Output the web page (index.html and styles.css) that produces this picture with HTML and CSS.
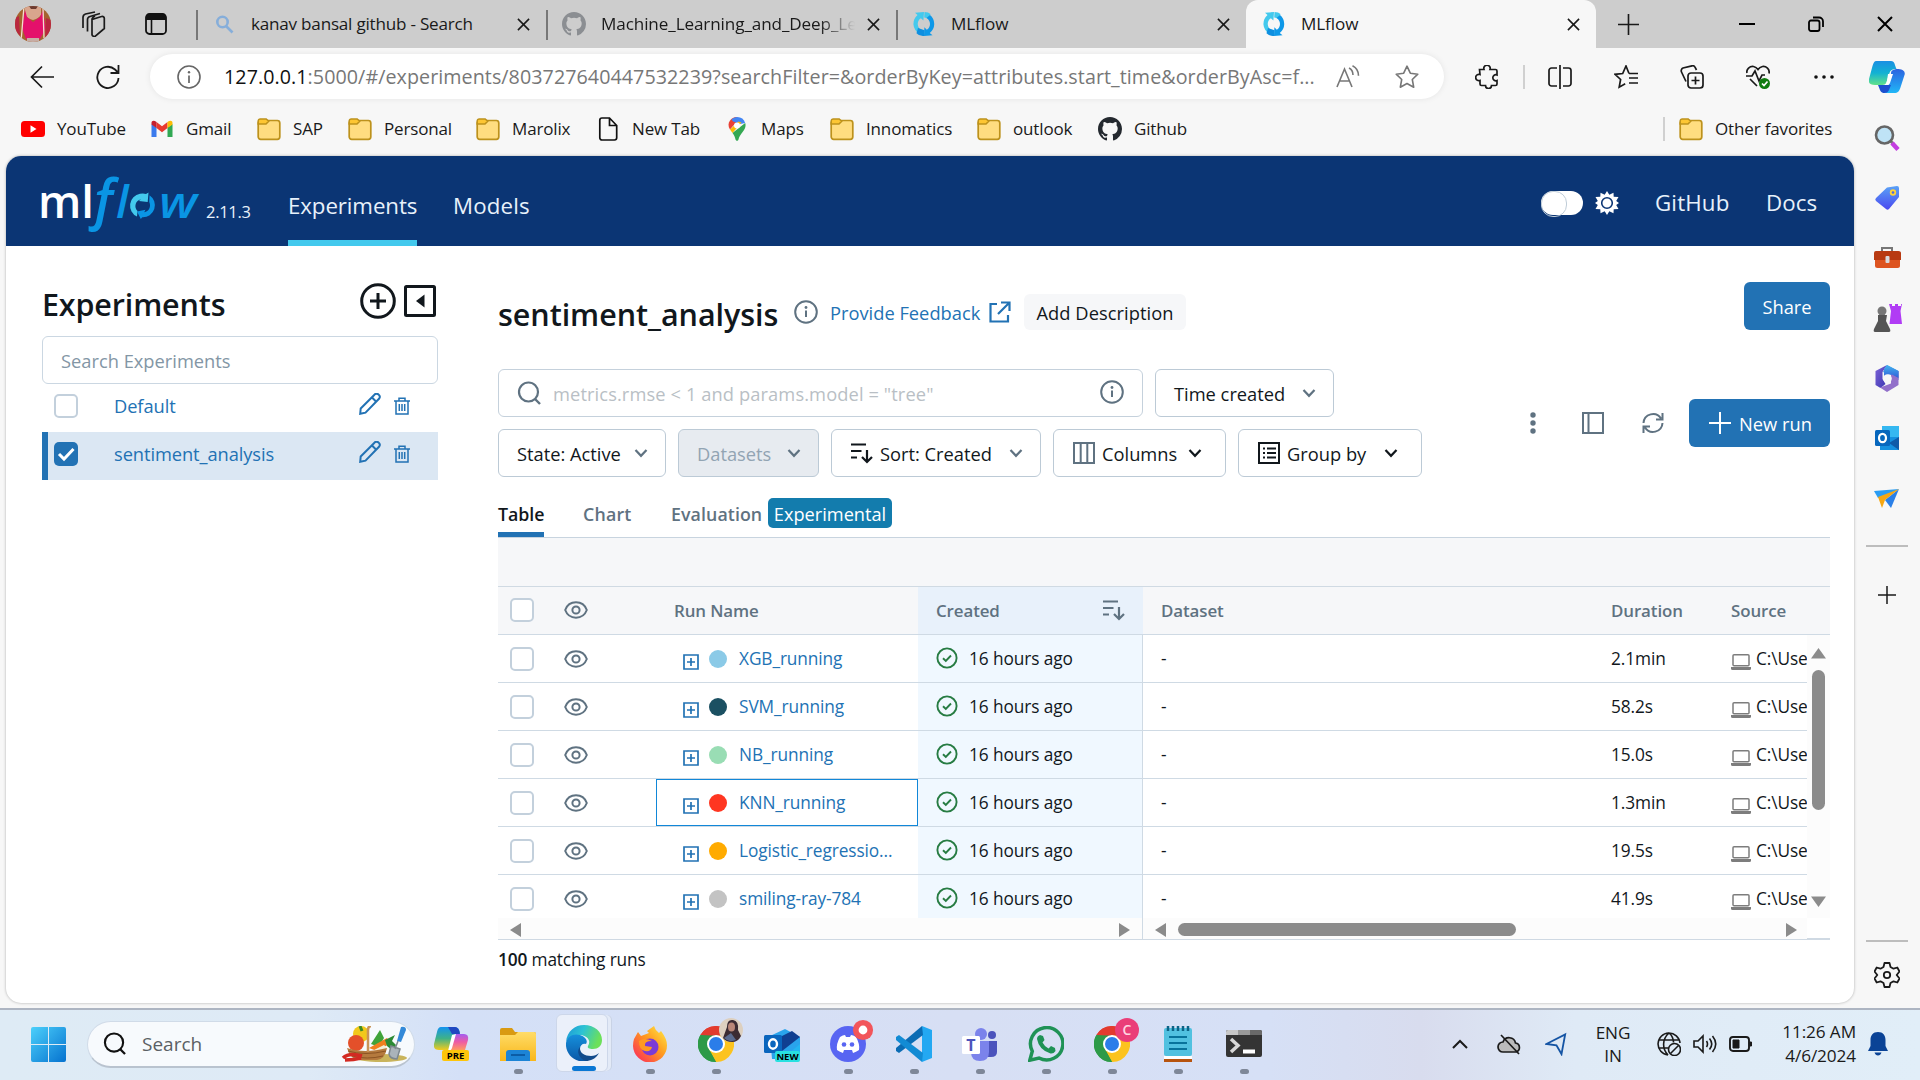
FILE: index.html
```html
<!DOCTYPE html>
<html lang="en">
<head>
<meta charset="utf-8">
<title>MLflow</title>
<link rel="stylesheet" href="styles.css">
</head>
<body>
<svg class="defs" aria-hidden="true">
  <defs>
    <linearGradient id="g-win" x1="0" y1="0" x2="1" y2="1"><stop offset="0" stop-color="#4cd0fb"/><stop offset="1" stop-color="#0572cf"/></linearGradient>
    <linearGradient id="g-cop1" x1="0" y1="0" x2="0" y2="1"><stop offset="0" stop-color="#1a8fe3"/><stop offset=".5" stop-color="#12b2d3"/><stop offset="1" stop-color="#62e28a"/></linearGradient>
    <linearGradient id="g-cop2" x1="0" y1="0" x2="0" y2="1"><stop offset="0" stop-color="#2b62e0"/><stop offset="1" stop-color="#20b7f7"/></linearGradient>
    <linearGradient id="g-pre1" x1="0" y1="0" x2="0" y2="1"><stop offset="0" stop-color="#1393f0"/><stop offset=".5" stop-color="#3fb287"/><stop offset="1" stop-color="#f2cb1d"/></linearGradient>
    <linearGradient id="g-pre2" x1="0" y1="0" x2="0" y2="1"><stop offset="0" stop-color="#a35df0"/><stop offset=".5" stop-color="#ee5ba4"/><stop offset="1" stop-color="#ff9a60"/></linearGradient>
    <linearGradient id="g-edge1" x1="0" y1="0" x2="1" y2=".3"><stop offset="0" stop-color="#1b96d8"/><stop offset=".5" stop-color="#2dc3d4"/><stop offset="1" stop-color="#6ce05a"/></linearGradient>
    <linearGradient id="g-edge2" x1="0" y1="0" x2="0" y2="1"><stop offset="0" stop-color="#1690dc"/><stop offset="1" stop-color="#0b57a6"/></linearGradient>
    <linearGradient id="g-tag" x1="0" y1="0" x2="0" y2="1"><stop offset="0" stop-color="#5aa2f6"/><stop offset="1" stop-color="#4a48f0"/></linearGradient>
    <linearGradient id="g-fold" x1="0" y1="0" x2="0" y2="1"><stop offset="0" stop-color="#ffdc68"/><stop offset="1" stop-color="#f9b71a"/></linearGradient>
    <linearGradient id="g-ff" x1="1" y1="0" x2="0" y2="1"><stop offset="0" stop-color="#fff04a"/><stop offset=".45" stop-color="#ff9a1f"/><stop offset="1" stop-color="#fb1c62"/></linearGradient>
    <linearGradient id="g-m1" x1="0" y1="0" x2="1" y2="1"><stop offset="0" stop-color="#7d63d8"/><stop offset="1" stop-color="#3a36b0"/></linearGradient>
    <linearGradient id="g-m2" x1="0" y1="0" x2="0" y2="1"><stop offset="0" stop-color="#43b4f0"/><stop offset="1" stop-color="#305fd8"/></linearGradient>
  </defs>
  <symbol id="x" viewBox="0 0 14 14"><path d="M1 1l12 12M13 1L1 13" fill="none" stroke="#1a1a1a" stroke-width="1.7"/></symbol>
  <symbol id="github" viewBox="0 0 16 16"><path d="M8 0C3.58 0 0 3.58 0 8c0 3.54 2.29 6.53 5.47 7.59.4.07.55-.17.55-.38 0-.19-.01-.82-.01-1.49-2.01.37-2.53-.49-2.69-.94-.09-.23-.48-.94-.82-1.13-.28-.15-.68-.52-.01-.53.63-.01 1.08.58 1.23.82.72 1.21 1.87.87 2.33.66.07-.52.28-.87.51-1.07-1.78-.2-3.64-.89-3.64-3.95 0-.87.31-1.59.82-2.15-.08-.2-.36-1.02.08-2.12 0 0 .67-.21 2.2.82a7.5 7.5 0 0 1 4 0c1.53-1.04 2.2-.82 2.2-.82.44 1.1.16 1.92.08 2.12.51.56.82 1.27.82 2.15 0 3.07-1.87 3.75-3.65 3.95.29.25.54.73.54 1.48 0 1.07-.01 1.93-.01 2.2 0 .21.15.46.55.38A8.01 8.01 0 0 0 16 8c0-4.42-3.58-8-8-8z"/></symbol>
  <symbol id="mlf" viewBox="0 0 24 24"><path d="M7 21.600A11.500 11.500 0 0 1 5.500 3L3 .8 12 0l-.6 8.400-2.500-2.200A6.800 6.800 0 0 0 9.500 18z" fill="#43c9ed"/><path d="M12.500 0q4 0 6 2l-2 4.800q-2-1.300-4.300-1.400z" fill="#43c9ed"/><path d="M18 3A11.500 11.500 0 0 1 17.800 21l2.700 2.200L12 24l.4-8.800 2.400 2.500A6.800 6.800 0 0 0 14.500 6z" fill="#0e98e8"/><path d="M6 16l6.500 2.300L12 24q-5 .2-7.500-2.800z" fill="#0e8fe0"/></symbol>
  <symbol id="folder" viewBox="0 0 24 24"><rect x="1.200" y="3.500" width="21.600" height="18.800" rx="2.500" fill="#ffdd80" stroke="#bd921c" stroke-width="1.700"/><path d="M1.200 6V4a2 2 0 0 1 2-2h6l2.500 2.200L9 7H1.200z" fill="#fdc633" stroke="#bd921c" stroke-width="1.500"/></symbol>
  <symbol id="chev" viewBox="0 0 14 14"><path d="M1.500 4L7 9.800 12.500 4" fill="none" stroke="currentColor" stroke-width="2.200"/></symbol>
  <symbol id="info" viewBox="0 0 24 24"><circle cx="12" cy="12" r="10.800" fill="none" stroke="currentColor" stroke-width="2"/><path d="M12 10.500v6.500" stroke="currentColor" stroke-width="2"/><circle cx="12" cy="7.500" r="1.400" fill="currentColor"/></symbol>
  <symbol id="glass" viewBox="0 0 24 24"><circle cx="11.500" cy="11" r="9.500" fill="none" stroke="currentColor" stroke-width="2.200"/><path d="M18 18l5 5" stroke="currentColor" stroke-width="2.400"/></symbol>
  <symbol id="sort" viewBox="0 0 22 22"><path d="M0 2.500h15M0 9h10.500M0 15.500h6M16 8v12M11 15l5 5 5-5" fill="none" stroke="currentColor" stroke-width="2.200"/></symbol>
  <symbol id="eye" viewBox="0 0 24 18"><path d="M1.200 9C5 -1.200 19 -1.200 22.800 9 19 19.200 5 19.200 1.200 9z" fill="none" stroke="#5f7281" stroke-width="2"/><circle cx="12" cy="9" r="3.600" fill="none" stroke="#5f7281" stroke-width="2"/></symbol>
  <symbol id="plusbox" viewBox="0 0 16 16"><path d="M1 1h14v14H1zM8 4v8M4 8h8" fill="none" stroke="#2272b4" stroke-width="1.700"/></symbol>
  <symbol id="ok" viewBox="0 0 22 22"><circle cx="11" cy="11" r="9.600" fill="none" stroke="#277c43" stroke-width="1.900"/><path d="M7 11.300l2.800 2.700L15 8.500" fill="none" stroke="#277c43" stroke-width="1.900"/></symbol>
  <symbol id="laptop" viewBox="0 0 20 16"><rect x="2" y=".8" width="16" height="11" rx="1" fill="none" stroke="#7d7d7d" stroke-width="1.500"/><path d="M0 13h20v1.500a1.500 1.500 0 0 1-1.500 1.500h-17A1.500 1.500 0 0 1 0 14.500z" fill="#7d7d7d"/></symbol>
  <symbol id="pencil" viewBox="0 0 22 22"><path d="M1.200 20.800l.5-5.300L15.200 2a2.700 2.700 0 0 1 4.800 3.800L6.500 19.700zM13 4.500l4.500 4.500" fill="none" stroke="#2272b4" stroke-width="2"/></symbol>
  <symbol id="trash" viewBox="0 0 16 18"><path d="M0 4h16M2 4v13h12V4M5 4V1.200h6V4M5.300 7v7M8 7v7M10.700 7v7" fill="none" stroke="#2272b4" stroke-width="1.500"/></symbol>
  <symbol id="chrome" viewBox="0 0 36 36"><path d="M18 18L2.400 9A18 18 0 0 1 33.600 9z" fill="#e33b2e"/><path d="M18 18L33.600 9A18 18 0 0 1 18 36z" fill="#fcc31e"/><path d="M18 18v18A18 18 0 0 1 2.400 9z" fill="#2d9a48"/><path d="M18 9.500h15.800L25.500 22z" fill="#fcc31e"/><path d="M25.500 22L18 36l-7.500-13.500z" fill="#fcc31e"/><path d="M10.600 22.500L2.400 9 18 9.500z" fill="#2d9a48"/><path d="M2.400 9A18 18 0 0 1 33.600 9.300H18z" fill="#e33b2e"/><path d="M10.600 22.500L18 36A18 18 0 0 1 2.400 9z" fill="#2d9a48"/><circle cx="18" cy="18" r="9" fill="#fff"/><circle cx="18" cy="18" r="7" fill="#2b7de9"/></symbol>
</svg>

<header class="tabbar">
  <svg class="avatar" viewBox="0 0 36 36"><clipPath id="av"><circle cx="18" cy="18" r="18"/></clipPath><g clip-path="url(#av)"><path fill="#a4632e" d="M0 0h36v36H0z"/><path fill="#d9a58d" d="M10 0h16v9q-3 4-8 5-5-1-8-5z"/><path fill="#e4106b" d="M10 4l2 7 6 5 7-5 3-7 3 18-6 11H11L7 22z"/><path fill="#b9273f" d="M31 12l5 2v14l-6 6zM0 12l4-2 1 20-5-6z"/><path fill="#6d3b30" d="M14 0h9l-2 3h-5z"/><path stroke="#f4ddcf" stroke-width="1.300" d="M9 0L6 36M28 2l1 30"/><path fill="#c7ada5" d="M12 32h12v4H12z"/></g></svg>
  <svg class="workspaces" viewBox="0 0 26 26" fill="none" stroke="#1a1a1a" stroke-width="1.700"><path d="M12 8.500l9.500-3a2 2 0 0 1 2.800 2v10L16 24.500a2.200 2.200 0 0 1-4-1.500zM7.500 20.500V8.500c0-1.500 1-2.500 2.500-3L20 2.500M3 17V6.500c0-2 1-3 2.500-3.500L15 1M12 8.500C12 7 13 6 15 5"/></svg>
  <svg class="tabactions" viewBox="0 0 22 22"><rect x="1" y="1" width="20" height="20" rx="3.500" fill="none" stroke="#111" stroke-width="1.800"/><path d="M1 7V4a3 3 0 0 1 3-3h14a3 3 0 0 1 3 3v3z" fill="#111"/><path d="M6.500 7v14" stroke="#111" stroke-width="1.600"/></svg>
  <div class="tabs">
    <div class="tab"><svg class="fav" viewBox="0 0 24 24" fill="none" stroke="#86aeda" stroke-width="2.600"><circle cx="10.500" cy="10" r="5.200"/><path d="M14 14l6.500 6.500"/></svg><span class="t-search">kanav bansal github - Search</span><svg class="cls"><use href="#x"/></svg></div>
    <div class="tab"><svg class="fav" fill="#8b8e92"><use href="#github"/></svg><span class="fade">Machine_Learning_and_Deep_Learning</span><svg class="cls"><use href="#x"/></svg></div>
    <div class="tab"><svg class="fav"><use href="#mlf"/></svg><span>MLflow</span><svg class="cls"><use href="#x"/></svg></div>
    <div class="tab active"><svg class="fav"><use href="#mlf"/></svg><span>MLflow</span><svg class="cls"><use href="#x"/></svg></div>
  </div>
  <svg class="newtab" viewBox="0 0 22 22"><path d="M11 0v22M0 11h22" stroke="#1a1a1a" stroke-width="1.700"/></svg>
  <div class="winctl">
    <svg viewBox="0 0 16 16"><path d="M0 8h16" stroke="#000" stroke-width="2"/></svg>
    <svg viewBox="0 0 16 16" fill="none" stroke="#000" stroke-width="1.800"><rect x="1" y="4.500" width="10.500" height="10.500" rx="2"/><path d="M5 1.500h6a4 4 0 0 1 4 4V11"/></svg>
    <svg viewBox="0 0 16 16"><path d="M1 1l14 14M15 1L1 15" stroke="#000" stroke-width="2"/></svg>
  </div>
</header>

<div class="toolbar">
  <svg class="back" viewBox="0 0 24 24" fill="none" stroke="#1a1a1a" stroke-width="1.700"><path d="M24 12H1.500M12 1.500L1.500 12 12 22.500"/></svg>
  <svg class="reload" viewBox="0 0 24 24" fill="none" stroke="#1a1a1a" stroke-width="1.800"><path d="M22.500 13A10.600 10.600 0 1 1 19 4.500l3 3M22.500 0v8h-8"/></svg>
  <div class="address">
    <svg viewBox="0 0 24 24"><circle cx="12" cy="12" r="11" fill="none" stroke="#666" stroke-width="1.600"/><path d="M12 10.500V18" stroke="#666" stroke-width="1.700"/><circle cx="12" cy="7.200" r="1.200" fill="#666"/></svg>
    <span class="url"><b>127.0.0.1</b>:5000/#/experiments/803727640447532239?searchFilter=&amp;orderByKey=attributes.start_time&amp;orderByAsc=f...</span>
    <svg viewBox="0 0 24 24" fill="none" stroke="#777" stroke-width="1.600"><path d="M1 22L8.500 4 16 22M3.500 16h10M13 3c3 1.500 4 4 4 7M16.500 .8c4 2 6 5.500 6 10"/></svg>
    <svg viewBox="0 0 24 24" fill="none" stroke="#777" stroke-width="1.600" stroke-linejoin="round"><path d="M12 1.200l3.300 7 7.500 1-5.500 5.300 1.400 7.700L12 18.500l-6.700 3.700 1.400-7.700L1.200 9.200l7.500-1z"/></svg>
  </div>
  <div class="tools">
    <svg viewBox="0 0 24 24" fill="none" stroke="#1a1a1a" stroke-width="1.700"><path d="M4.500 4.500H9a3.200 3.200 0 1 1 6 0h5.500a1.500 1.500 0 0 1 1.500 1.500v4a3 3 0 1 0 0 5.500V19a1.500 1.500 0 0 1-1.500 1.500h-4a3 3 0 1 1-6 0h-4A1.500 1.500 0 0 1 5 19v-3.500a3.200 3.200 0 1 1 0-6z"/></svg>
    <i class="sep"></i>
    <svg viewBox="0 0 24 24" fill="none" stroke="#1a1a1a" stroke-width="1.700"><path d="M12 0v24M9 3H3.500A2.500 2.500 0 0 0 1 5.500v13A2.500 2.500 0 0 0 3.500 21H9M15 3h5.500A2.500 2.500 0 0 1 23 5.500v13a2.500 2.500 0 0 1-2.500 2.500H15"/></svg>
    <svg viewBox="0 0 24 24" fill="none" stroke="#1a1a1a" stroke-width="1.700"><path d="M15 8.500L12 1 8.700 8.500 1 9.300l5.600 5.200-1.400 7.700 6-3.500M15 8.500h9M15 13h9M15 18h9"/></svg>
    <svg viewBox="0 0 24 24" fill="none" stroke="#1a1a1a" stroke-width="1.700"><rect x="8" y="8" width="15" height="15" rx="3"/><path d="M15.500 11.500v8M11.500 15.500h8M6 16.500L1.500 7a3 3 0 0 1 1.500-4L12 .8a2.600 2.600 0 0 1 3 1.400L16.500 5"/></svg>
    <svg viewBox="0 0 24 24" fill="none" stroke="#1a1a1a" stroke-width="1.700"><path d="M1 8C0 4 4 1 7.500 1.500 10 2 11 3 12 4.500 13 3 14 2 16.500 1.500 20 1 24 4 23 8.500M0 11h6l3-5 4 10 3-6h3M4 14l7 7"/><circle cx="18.500" cy="18.500" r="5.500" fill="#107c10" stroke="none"/><path d="M16 18.500l2 2 3.500-4" stroke="#fff"/></svg>
    <svg viewBox="0 0 24 24"><g fill="#111"><circle cx="4" cy="12" r="1.800"/><circle cx="12" cy="12" r="1.800"/><circle cx="20" cy="12" r="1.800"/></g></svg>
  </div>
  <svg class="copilot" viewBox="0 0 36 32"><path d="M20 8h8c4 0 8 1 7.800 5l-4.500 14c-1 3-2.500 5-6 5H14c3 0 4-2 5-5l3-14c0-3 1-4 5-5z" fill="url(#g-cop2)"/><path d="M9 24h13l-2 5c-1 2-2 3-4.500 3-4 0-4-2-6.500-8z" fill="#1d50cf"/><path d="M7.500 0H22c4 0 3.500 4 5.500 8-4 0-6 1-7 4l-3 9c-1 3-3 3-6 3H6c-5 0-7-2-6-6L3.500 5C4.500 2 5 0 7.500 0z" fill="url(#g-cop1)"/><path d="M19 13h5l-3 9c-.5 1.500-2 2-5.500 2 1.500-1 2-2 2.500-4z" fill="#fff"/></svg>
</div>

<nav class="bookmarks">
  <div class="bm"><svg viewBox="0 0 24 24"><rect y="4" width="24" height="16" rx="3.500" fill="#f00"/><path d="M9.500 8.300v7.400l6-3.700z" fill="#fff"/></svg><span>YouTube</span></div>
  <div class="bm"><svg viewBox="0 0 24 24"><path d="M1.500 20V7l5 3.500V20z" fill="#3b7bed"/><path d="M17.500 20v-9.500l5-3.500v13z" fill="#31a853"/><path d="M6.500 11V5l5.500 4.200L17.500 5v6L12 15.200z" fill="#e8392f"/><path d="M1.500 7.500V6c0-2.500 2.500-3 5-1v6z" fill="#c51f2f"/><path d="M22.500 7.500V6c0-2.500-2.500-3-5-1v6z" fill="#fbbc05"/></svg><span>Gmail</span></div>
  <div class="bm"><svg><use href="#folder"/></svg><span>SAP</span></div>
  <div class="bm"><svg><use href="#folder"/></svg><span>Personal</span></div>
  <div class="bm"><svg><use href="#folder"/></svg><span>Marolix</span></div>
  <div class="bm"><svg viewBox="0 0 24 24" fill="none" stroke="#111" stroke-width="1.700"><path d="M13.500 1H6a2.200 2.200 0 0 0-2.200 2.200v17.600A2.200 2.200 0 0 0 6 23h12.500a2.200 2.200 0 0 0 2.200-2.200V8.500zM13.500 1v7.500h7.200"/></svg><span>New Tab</span></div>
  <div class="bm"><svg viewBox="0 0 24 24"><path d="M12 0a8.500 8.500 0 0 0-7 3.500L10 8z" fill="#e94235"/><path d="M12 0a8.500 8.500 0 0 1 8.200 6L10 8 6.500 2.300A8.500 8.500 0 0 1 12 0z" fill="#4285f4"/><path d="M5 3.500C3 6 3 9.500 5 12.500l6-7z" fill="#e94235"/><path d="M5 12.500l2.500 3.500 9-10.500-3-1z" fill="#fbbc04"/><path d="M20.200 6c1 3-.2 6-2.200 8.500-2.500 3-4 5.500-4.500 8-.5 1.800-2.300 1.800-3 0-.5-2.500-1.500-4.500-3-6.500z" fill="#34a853"/><circle cx="12" cy="8.500" r="3" fill="#fff"/></svg><span>Maps</span></div>
  <div class="bm"><svg><use href="#folder"/></svg><span>Innomatics</span></div>
  <div class="bm"><svg><use href="#folder"/></svg><span>outlook</span></div>
  <div class="bm"><svg fill="#24292f"><use href="#github"/></svg><span>Github</span></div>
  <div class="bm other"><svg><use href="#folder"/></svg><span>Other favorites</span></div>
</nav>

<div class="workspace">
  <div class="page">
    <div class="mlnav">
      <svg class="logo" viewBox="0 0 156 62"><text class="lg-ml" x="-4" y="47.500" textLength="56" lengthAdjust="spacingAndGlyphs">ml</text><text class="lg-f" x="47" y="47.500" textLength="30" lengthAdjust="spacingAndGlyphs">ƒ</text><text class="lg-l" x="74" y="47.500">l</text><path d="M95 46.500A12 12 0 0 1 98 23.800q3-.8 6 .1l2.500-1.500-.8 9.600-8.800-1 2-1.800A7 7 0 0 0 95.500 41z" fill="#43c9ed"/><path d="M107.500 25.300a12 12 0 0 1-7.200 22l-1.500 1.800-3.800-7.500 8.500-1.800-1.300 2.400A7 7 0 0 0 107.200 32z" fill="#0a95e4"/><text class="lg-w" x="117" y="47.500" textLength="38" lengthAdjust="spacingAndGlyphs">w</text></svg>
      <span class="ver">2.11.3</span>
      <a class="nav cur">Experiments</a>
      <a class="nav mod">Models</a>
      <div class="mlright">
        <i class="toggle"></i>
        <svg class="sun" viewBox="0 0 24 24"><path d="M12 0l2.300 3.700L18.500 1.700l.2 4.100 4.800.2-2.300 4L24 12l-2.800 2 2.300 4-4.800.2-.2 4.100-4.200-2L12 24l-2.300-3.700-4.200 2-.2-4.100L.5 18l2.300-4L0 12l2.800-2L.5 6l4.800-.2.2-4.100 4.200 2z" fill="#fff"/><circle cx="12" cy="12" r="5.300" fill="#fff" stroke="#0b3574" stroke-width="1.600"/></svg>
        <a class="gh">GitHub</a><a class="docs">Docs</a>
      </div>
    </div>
    <div class="content">
      <aside class="exps">
        <div class="exphead"><h2>Experiments</h2>
          <svg class="addexp" viewBox="0 0 36 36" fill="none" stroke="#11171c" stroke-width="3"><circle cx="18" cy="18" r="16.300"/><path d="M18 10v16M10 18h16"/></svg>
          <svg class="collapse" viewBox="0 0 32 32"><rect x="1.500" y="1.500" width="29" height="29" rx="1" fill="none" stroke="#11171c" stroke-width="3"/><path d="M20.500 9.500v13l-8.500-6.500z" fill="#11171c"/></svg>
        </div>
        <div class="expsearch">Search Experiments</div>
        <div class="exprow"><i class="cb"></i><a>Default</a><svg class="pen"><use href="#pencil"/></svg><svg class="bin"><use href="#trash"/></svg></div>
        <div class="exprow sel"><i class="cb on"><svg viewBox="0 0 24 24"><path d="M5 12l5 5 9.500-10" fill="none" stroke="#fff" stroke-width="3"/></svg></i><a>sentiment_analysis</a><svg class="pen"><use href="#pencil"/></svg><svg class="bin"><use href="#trash"/></svg></div>
      </aside>
      <main>
        <div class="title"><h1>sentiment_analysis</h1>
          <svg class="i24"><use href="#info"/></svg><a class="fb">Provide Feedback</a>
          <svg class="ext" viewBox="0 0 22 22" fill="none" stroke="#2272b4" stroke-width="2.200"><path d="M8 3H1.500v17.500H19V14M12 1.500h8.500V10M20 2L9 13"/></svg>
          <span class="desc">Add Description</span><span class="btn share">Share</span></div>
        <div class="controls">
          <div class="filters">
            <div class="frow">
              <div class="runsearch"><svg class="i24"><use href="#glass"/></svg><span>metrics.rmse &lt; 1 and params.model = "tree"</span><svg class="i24 inf"><use href="#info"/></svg></div>
              <div class="sel time"><span>Time created</span><svg class="chev"><use href="#chev"/></svg></div>
            </div>
            <div class="frow">
              <div class="sel state"><span>State: Active</span><svg class="chev"><use href="#chev"/></svg></div>
              <div class="sel datasets"><span>Datasets</span><svg class="chev"><use href="#chev"/></svg></div>
              <div class="sel sortby"><svg class="ic"><use href="#sort"/></svg><span>Sort: Created</span><svg class="chev"><use href="#chev"/></svg></div>
              <div class="sel columns"><svg class="ic g" viewBox="0 0 22 22" fill="none" stroke="currentColor" stroke-width="2"><path d="M1 1h20v20H1zM7.700 1v20M14.300 1v20"/></svg><span>Columns</span><svg class="chev dark"><use href="#chev"/></svg></div>
              <div class="sel groupby"><svg class="ic" viewBox="0 0 22 22" fill="none" stroke="currentColor" stroke-width="2"><path d="M1 1h20v20H1zM5 6.500h2M9 6.500h9M5 11h2M9 11h9M5 15.500h2M9 15.500h9"/></svg><span>Group by</span><svg class="chev dark"><use href="#chev"/></svg></div>
            </div>
          </div>
          <div class="actions">
            <svg viewBox="0 0 22 22"><g fill="#5f7281"><circle cx="11" cy="3" r="2.700"/><circle cx="11" cy="11" r="2.700"/><circle cx="11" cy="19" r="2.700"/></g></svg>
            <svg viewBox="0 0 22 22" fill="none" stroke="#5f7281" stroke-width="2"><path d="M1 1h20v20H1zM6.500 1v20"/></svg>
            <svg viewBox="0 0 22 22" fill="none" stroke="#5f7281" stroke-width="2"><path d="M1.500 11A9.500 9.500 0 0 1 19 6.500M20.500 1v6.500H14M20.500 11A9.500 9.500 0 0 1 3 15.500M1.500 21v-6.500H8"/></svg>
            <span class="btn newrun"><svg viewBox="0 0 22 22"><path d="M11 0v22M0 11h22" stroke="#fff" stroke-width="2"/></svg>New run</span>
          </div>
        </div>
        <div class="views"><a class="cur">Table</a><a class="chart">Chart</a><a class="eval">Evaluation</a><span>Experimental</span></div>
        <div class="grid">
          <div class="band"></div>
          <div class="hrow">
            <div class="c-cb"><i class="cb"></i></div><div class="c-eye"><svg><use href="#eye"/></svg></div><div class="c-name">Run Name</div><div class="c-created">Created<svg><use href="#sort"/></svg></div><div class="c-data">Dataset</div><div class="c-dur">Duration</div><div class="c-src">Source</div>
          </div>
          <div class="body">
            <div class="rows">
              <div class="row"><div class="c-cb"><i class="cb"></i></div><div class="c-eye"><svg><use href="#eye"/></svg></div><div class="c-name"><svg><use href="#plusbox"/></svg><i class="dot blue"></i><a>XGB_running</a></div><div class="c-created"><svg><use href="#ok"/></svg>16 hours ago</div><div class="c-data">-</div><div class="c-dur">2.1min</div><div class="c-src"><svg><use href="#laptop"/></svg>C:\Use</div></div>
              <div class="row"><div class="c-cb"><i class="cb"></i></div><div class="c-eye"><svg><use href="#eye"/></svg></div><div class="c-name"><svg><use href="#plusbox"/></svg><i class="dot navy"></i><a>SVM_running</a></div><div class="c-created"><svg><use href="#ok"/></svg>16 hours ago</div><div class="c-data">-</div><div class="c-dur">58.2s</div><div class="c-src"><svg><use href="#laptop"/></svg>C:\Use</div></div>
              <div class="row"><div class="c-cb"><i class="cb"></i></div><div class="c-eye"><svg><use href="#eye"/></svg></div><div class="c-name"><svg><use href="#plusbox"/></svg><i class="dot green"></i><a>NB_running</a></div><div class="c-created"><svg><use href="#ok"/></svg>16 hours ago</div><div class="c-data">-</div><div class="c-dur">15.0s</div><div class="c-src"><svg><use href="#laptop"/></svg>C:\Use</div></div>
              <div class="row"><div class="c-cb"><i class="cb"></i></div><div class="c-eye"><svg><use href="#eye"/></svg></div><div class="c-name focus"><svg><use href="#plusbox"/></svg><i class="dot red"></i><a>KNN_running</a></div><div class="c-created"><svg><use href="#ok"/></svg>16 hours ago</div><div class="c-data">-</div><div class="c-dur">1.3min</div><div class="c-src"><svg><use href="#laptop"/></svg>C:\Use</div></div>
              <div class="row"><div class="c-cb"><i class="cb"></i></div><div class="c-eye"><svg><use href="#eye"/></svg></div><div class="c-name"><svg><use href="#plusbox"/></svg><i class="dot amber"></i><a>Logistic_regressio...</a></div><div class="c-created"><svg><use href="#ok"/></svg>16 hours ago</div><div class="c-data">-</div><div class="c-dur">19.5s</div><div class="c-src"><svg><use href="#laptop"/></svg>C:\Use</div></div>
              <div class="row"><div class="c-cb"><i class="cb"></i></div><div class="c-eye"><svg><use href="#eye"/></svg></div><div class="c-name"><svg><use href="#plusbox"/></svg><i class="dot grey"></i><a>smiling-ray-784</a></div><div class="c-created"><svg><use href="#ok"/></svg>16 hours ago</div><div class="c-data">-</div><div class="c-dur">41.9s</div><div class="c-src"><svg><use href="#laptop"/></svg>C:\Use</div></div>
            </div>
            <div class="vscroll"><svg viewBox="0 0 15 11"><path d="M7.500 0L15 10.500H0z"/></svg><i></i><svg viewBox="0 0 15 11"><path d="M7.500 11L15 .5H0z"/></svg></div>
          </div>
          <div class="hscrolls">
            <div class="hscroll a"><svg viewBox="0 0 11 14"><path d="M0 7L11 0v14z"/></svg><svg viewBox="0 0 11 14"><path d="M11 7L0 0v14z"/></svg></div>
            <div class="hscroll b"><svg viewBox="0 0 11 14"><path d="M0 7L11 0v14z"/></svg><i></i><svg viewBox="0 0 11 14"><path d="M11 7L0 0v14z"/></svg></div>
          </div>
        </div>
        <div class="count"><b>100</b> matching runs</div>
      </main>
    </div>
  </div>
  <aside class="edgebar">
    <svg viewBox="0 0 30 30"><path d="M18.500 18l3 3" stroke="#777" stroke-width="3"/><circle cx="12.500" cy="12" r="8.500" fill="#bfe3f6" stroke="#666" stroke-width="2.600"/><path d="M20 20l6 6.500" stroke="#c33ee0" stroke-width="4.500"/></svg>
    <svg viewBox="0 0 30 30"><path d="M15 4.500L25 3q2 0 2 2v9L17 26q-1.500 1.500-3 0L4 18q-1.500-1.500 0-3z" fill="url(#g-tag)"/><circle cx="21" cy="9.500" r="3.200" fill="#ffd33c"/><circle cx="21" cy="9.500" r="1.300" fill="#506ae0"/></svg>
    <svg viewBox="0 0 30 30"><path d="M10 9V5h10v4" fill="none" stroke="#777" stroke-width="2"/><rect x="3" y="8" width="25" height="17" rx="2.500" fill="#dd5420"/><path d="M2 10q0-2 2-2h22q3 0 3 2v7H2z" fill="#b83a12"/><rect x="13.500" y="13" width="4" height="7" rx="1" fill="#d7dbe0"/></svg>
    <svg viewBox="0 0 30 30"><path d="M17 1h3v2h3V1h3v2h3V1h1l-1.500 7 1.500 13H17.500L19 8z" fill="#b13cf5"/><circle cx="10" cy="8" r="4.500" fill="#777"/><path d="M6 12h9l-1 6 4 8q1 3-1 3H3q-2 0-1-3l4-8z" fill="#555"/></svg>
    <svg viewBox="0 0 30 30"><path d="M15 2L3.500 8v14l5 3 5-4-3-5V9z" fill="url(#g-m1)"/><path d="M15 2l11.500 6v9L19 12l-8-3z" fill="url(#g-m2)"/><path d="M26.500 8v14L15 29l-7-4.500 11-4V12z" fill="#9270ca"/><path d="M15 2l11.500 6v7L19 11l-7 2V6z" fill="url(#g-m2)"/><circle cx="15.500" cy="15.500" r="4.300" fill="#f7f7f7"/></svg>
    <svg viewBox="0 0 30 30"><path d="M10 3h17v11H10z" fill="#35b8f1"/><path d="M8 14h19v13H8z" fill="#1490df"/><path d="M27 14v13L17 20z" fill="#0f5ba8"/><rect x="3" y="7" width="15" height="16" rx="1.500" fill="#0767bd"/><ellipse cx="10.500" cy="15" rx="3.500" ry="4.200" fill="none" stroke="#fff" stroke-width="2.200"/></svg>
    <svg viewBox="0 0 30 30"><path d="M2 8l25-2-13 9-8 0z" fill="#2a9df4"/><path d="M27 6l-8 19-6-8z" fill="#2a80e8"/><path d="M27 6L6 14l4 11 3-8z" fill="#f5a713"/></svg>
    <i class="rule"></i>
    <svg class="plus" viewBox="0 0 18 18"><path d="M9 0v18M0 9h18" stroke="#1a1a1a" stroke-width="1.500"/></svg>
    <i class="rule low"></i>
    <svg class="gear" viewBox="0 0 26 26" fill="none" stroke="#1a1a1a" stroke-width="1.800" stroke-linejoin="round"><path d="M10.500 1h5l1 4 3 1.700 3.800-1.200 2.200 4-2.800 3.500 2.800 3.500-2.200 4-3.800-1.200-3 1.700-1 4h-5l-1-4-3-1.700-3.800 1.200-2.200-4L3.300 13 .5 9.500l2.200-4 3.800 1.200 3-1.700z"/><circle cx="13" cy="13" r="3.200"/></svg>
  </aside>
</div>

<footer class="taskbar">
  <svg class="start" viewBox="0 0 35 35" fill="url(#g-win)"><path d="M2 0h15v17H0V2q0-2 2-2zM18 0h15q2 0 2 2v15H18zM0 18h17v17H2q-2 0-2-2zM18 18h17v15q0 2-2 2H18z"/></svg>
  <div class="tsearch"><svg class="i22"><use href="#glass"/></svg><span>Search</span>
    <svg class="basket" viewBox="0 0 67 36"><ellipse cx="40" cy="32" rx="26" ry="4" fill="#c9b45c"/><circle cx="20" cy="8" r="8" fill="#f2c81c"/><path d="M19 0l2 5" stroke="#3d8b28" stroke-width="3"/><path d="M30 18L39 4l4 8-5 9z" fill="#3fa339"/><path d="M28 22L46 12l4 5-14 8z" fill="#f0801e"/><path d="M44 14l10-5-3 6 4 4-3 6-6-5z" fill="#2c8a35"/><path d="M33 24l10-5 4 4-8 4z" fill="#f3efd6"/><circle cx="15" cy="17" r="8" fill="#e4502a"/><path d="M6 22q17 6 40 0-2 11-10 12H18Q9 33 6 22z" fill="#b57a3e"/><path d="M7 25q17 5 38 0M11 30q15 4 31 0" stroke="#8b5424" fill="none"/><path d="M27 26V4q0-4 3-4" fill="none" stroke="#c99458" stroke-width="2.500"/><path d="M60 1q5-1 5 3l-5 12-4-1z" fill="#3389d8"/><path d="M57 15l-3 8M50 20l9 3-3 10q-7 0-8-5z" fill="#aab3ba" stroke="#7d878e" stroke-width="1.500"/><path d="M2 32q6-6 19-2M4 34q9 0 16-2" fill="none" stroke="#d32a22" stroke-width="3.500"/></svg>
  </div>
  <div class="apps">
    <div class="app"><svg viewBox="0 0 36 36"><path d="M7 1h14q4 0 5 6l-8 6-2 11H5q-6 0-5-6L3 6q1-5 4-5z" fill="url(#g-pre1)"/><path d="M14 1h7q4 0 5 7h-8z" fill="#2048c0"/><path d="M21 8h9q5 0 4 6l-3 10H16z" fill="url(#g-pre2)"/><path d="M18 9l4-1-4 14q-1 3-4 3z" fill="#fff"/><rect x="8" y="24" width="27" height="11" rx="2" fill="#fdc50b"/><text x="21.500" y="33" text-anchor="middle" class="badge">PRE</text></svg></div>
    <div class="app run"><svg viewBox="0 0 36 36"><path d="M0 4q0-2 2-2h10l3 4h19q2 0 2 2v4H0z" fill="#d99a12"/><path d="M0 9h15l3-3h16q2 0 2 2v27H0z" fill="url(#g-fold)"/><path d="M6 35V27q0-3 3-3h18q3 0 3 3v8z" fill="#1c84d6"/><path d="M11 29h14" stroke="#0b5ca6" stroke-width="2"/></svg></div>
    <div class="app run cur"><svg viewBox="0 0 36 36"><path d="M0 17C1 6 9 0 18 0c11 0 18 7 18 15 0 6-4 9-9 9-4 0-6-1-5-3 4-6-2-11-8-11C7 10 2 13 0 17z" fill="url(#g-edge1)"/><path d="M0 18C1 11 8 8 14 10c6 2 8 6 6 9-3-1-6 1-6 5 0 5 4 9 8 12C9 39-1 29 0 18z" fill="url(#g-edge2)"/><path d="M14 22c-1 6 5 9 11 9 3 0 6-1 8-3-3 6-9 8-13 8-7-2-10-10-6-14z" fill="#114a8b"/></svg></div>
    <div class="app run"><svg viewBox="0 0 36 36"><path d="M2 13l4-7 3 4 8-3-2-2 7-5q1 4 5 7l2-2q6 8 6 14A17 17 0 0 1 1 20q0-4 1-7z" fill="url(#g-ff)"/><circle cx="18" cy="21" r="8.500" fill="#7b3bd6"/><path d="M7 15q5-4 13 0-8 0-7 5l7 1q-1 5-7 4-6-1-6-10z" fill="#ff9a21"/></svg></div>
    <div class="app run"><svg><use href="#chrome"/></svg><svg class="pin" viewBox="0 0 24 24"><circle cx="12" cy="12" r="12" fill="#ddd0c0"/><path d="M8 9q0-8 6-7 6 1 5 10l3 6q-3 6-9 6-6 0-9-4z" fill="#3b2b33"/><ellipse cx="12.500" cy="9" rx="3.500" ry="4.500" fill="#b98678"/><path d="M5 20l7-5 5 7q-7 3-12-2z" fill="#5a6b90"/></svg></div>
    <div class="app"><svg viewBox="0 0 36 36"><path d="M6 10L21 3l15 8v22H8z" fill="#2aa4ec"/><path d="M14 12l14-7 8 6-18 14z" fill="#103f91"/><path d="M36 18v15H18z" fill="#23b5f2"/><rect y="9" width="18" height="18" rx="1.500" fill="#0a65bd"/><ellipse cx="9" cy="18" rx="4" ry="4.700" fill="none" stroke="#fff" stroke-width="2.400"/><rect x="11" y="25" width="25" height="11" rx="2" fill="#28e0e0"/><text x="23.500" y="33.800" text-anchor="middle" class="badge">NEW</text></svg></div>
    <div class="app run"><svg viewBox="0 0 36 36"><circle cx="18" cy="18" r="18" fill="#5865f2"/><path d="M10 11q3-2 5-2l1 2h4l1-2q2 0 5 2 4 7 3 13-3 2-6 3l-1-3h-8l-1 3q-3-1-6-3-1-6 3-13z" fill="#fff"/><circle cx="14" cy="18.500" r="2.300" fill="#5865f2"/><circle cx="22" cy="18.500" r="2.300" fill="#5865f2"/></svg><svg class="pin dc" viewBox="0 0 24 24"><circle cx="12" cy="12" r="11" fill="#f2555a"/><circle cx="12" cy="12" r="4.800" fill="#fff"/></svg></div>
    <div class="app run"><svg viewBox="0 0 36 36"><path d="M26 0l10 4v28l-10 4L26 26z" fill="#23a8f2"/><path d="M26 0L0 22v3l3 2L27 9z" fill="#0b6cb4"/><path d="M26 36L0 14v-3l3-2 24 18z" fill="#128bd4"/></svg></div>
    <div class="app run"><svg viewBox="0 0 36 36"><circle cx="19" cy="8" r="6" fill="#7b83eb"/><circle cx="30" cy="9" r="4" fill="#4b53bc"/><path d="M25 15h10v11q0 5-6 5h-4z" fill="#4b53bc"/><path d="M9 15h18v11q0 9-9 9t-9-9z" fill="#7b83eb"/><rect y="10" width="18" height="18" rx="1.500" fill="#fff"/><text x="9" y="24.500" text-anchor="middle" class="teams">T</text></svg></div>
    <div class="app run"><svg viewBox="0 0 36 36"><path d="M1.800 34.200l2.500-9A16.200 16.200 0 1 1 11 32z" fill="none" stroke="#1f9256" stroke-width="3.500"/><path d="M12 9l3 1 1.500 4-2 2.500q2 4 6 6l2.500-2.500 4 2 .5 3q-2 3-5 2.500Q11 24 9 13q0-3 3-4z" fill="#1f9256"/></svg></div>
    <div class="app run"><svg><use href="#chrome"/></svg><svg class="pin" viewBox="0 0 24 24"><circle cx="12" cy="12" r="12" fill="#ea3e78"/><text x="12" y="17" text-anchor="middle" class="cbadge">C</text></svg></div>
    <div class="app run"><svg viewBox="0 0 36 36"><path d="M4 33h28v3H4z" fill="#b7540f"/><path d="M4 30h28v3H4z" fill="#fff"/><rect x="4" y="2" width="28" height="28" rx="2" fill="#51c1e0"/><path d="M9 11h18M9 17h18M9 23h18" stroke="#08739b" stroke-width="2"/><path d="M8 0v5M13 0v5M18 0v5M23 0v5M28 0v5" stroke="#0d6486" stroke-width="2.500"/></svg></div>
    <div class="app run"><svg viewBox="0 0 36 36"><rect y="4" width="36" height="27" rx="2" fill="#343434"/><path d="M0 9V6q0-2 2-2h10v5z" fill="#c8c8c8"/><path d="M12 4h12v5H12z" fill="#999"/><path d="M24 4h10q2 0 2 2v3H24z" fill="#696969"/><path d="M5 13l7 6.500L5 26" fill="none" stroke="#d8d8d8" stroke-width="3.500"/><path d="M17 25.500h12" stroke="#fff" stroke-width="4"/></svg></div>
  </div>
  <div class="tray">
    <svg class="t-up" viewBox="0 0 16 16"><path d="M1 12l7-7 7 7" fill="none" stroke="#1a1a1a" stroke-width="2"/></svg>
    <svg class="t-cloud" viewBox="0 0 24 24"><path d="M6 20a5 5 0 0 1 0-10 6.500 6.500 0 0 1 12.500 1A4.600 4.600 0 0 1 19 20z" fill="#bbb" stroke="#1a1a1a" stroke-width="1.700"/><path d="M4 3l18 19" stroke="#1a1a1a" stroke-width="1.700"/></svg>
    <svg class="t-loc" viewBox="0 0 24 24"><path d="M22 1.500L18 23l-5.500-9.500L1.500 12z" fill="none" stroke="#1454a4" stroke-width="2"/></svg>
    <div class="lang"><span>ENG</span><span>IN</span></div>
    <svg class="t-net" viewBox="0 0 24 24" fill="none" stroke="#1a1a1a" stroke-width="1.600"><path d="M11 23a11 11 0 1 1 12-12M1.500 8h21M1.500 16H11M11 23C5 17 5 7 12 1c3 2.500 4.500 6 4.500 9.500"/><circle cx="17.500" cy="17.500" r="6"/><path d="M13.500 21.500l8-8"/></svg>
    <svg class="t-vol" viewBox="0 0 24 24" fill="none" stroke="#1a1a1a" stroke-width="1.600"><path d="M1 9h4l5-5v16l-5-5H1zM13.500 9q2 3 0 6M16.500 6.500q4.500 5.500 0 11M19.500 4q6.500 8 0 16"/></svg>
    <svg class="t-bat" viewBox="0 0 24 24"><rect x="1" y="5" width="19" height="14" rx="3" fill="none" stroke="#1a1a1a" stroke-width="1.900"/><path d="M4 8h6v8H4zM21 10h1.500v4H21z" fill="#1a1a1a" stroke="#1a1a1a"/></svg>
    <div class="clock"><span>11:26 AM</span><span>4/6/2024</span></div>
    <svg class="t-bell" viewBox="0 0 20 24"><path d="M10 0c5 0 7.500 3.500 7.500 8v6l2.500 5H0l2.500-5V8C2.500 3.500 5 0 10 0zM6.500 20.500h7q-1 3-3.500 3t-3.500-3z" fill="#0a4396"/></svg>
  </div>
</footer>
</body>
</html>
```
FILE: styles.css
```css
* { box-sizing: border-box; }
html, body { margin: 0; width: 1920px; height: 1080px; overflow: hidden; }
body { display: flex; flex-direction: column; background: #f7f7f7; font-family: "Open Sans", "Noto Sans", sans-serif; font-size: 18.3px; color: #11171c; white-space: nowrap; }
svg { flex: none; display: block; }
i { flex: none; display: block; }
.defs { width: 0; height: 0; position: absolute; }

/* Tab strip */
.tabbar { height: 48px; flex: none; display: flex; align-items: center; background: #cdcdcd; padding-left: 15px; font-size: 17.100px; color: #1a1a1a; }
.avatar { width: 36px; height: 36px; }
.workspaces { width: 26px; height: 26px; margin-left: 29px; }
.tabactions { width: 22px; height: 22px; margin-left: 39px; }
.tabs { display: flex; height: 48px; margin-left: 29px; }
.tab { width: 350px; display: flex; align-items: center; padding: 0 16px 0 14px; border-left: 2px solid transparent; background: linear-gradient(#777, #777) no-repeat -2px 10px / 2px 30px; background-origin: padding-box; background-clip: border-box; }
.tab .fav { width: 24px; height: 24px; }
.tab span { flex: 1; margin-left: 15px; padding-bottom: 2px; letter-spacing: -.1px; overflow: hidden; }
.tab .t-search { letter-spacing: -.22px; }
.tab .cls { width: 13px; height: 13px; margin-left: 12px; }
.tab .fade { -webkit-mask-image: linear-gradient(90deg, #000 86%, transparent); mask-image: linear-gradient(90deg, #000 86%, transparent); }
.tab.active { background: #f7f7f7; border-radius: 12px 12px 0 0; }
.newtab { width: 21px; height: 21px; margin-left: 22px; }
.winctl { display: flex; gap: 53px; margin-left: 100px; }
.winctl svg { width: 16px; height: 16px; }

/* Address row */
.toolbar { height: 57px; flex: none; display: flex; align-items: center; padding-left: 30px; }
.back { width: 24px; height: 24px; }
.reload { width: 24px; height: 24px; margin-left: 42px; }
.address { width: 1294px; height: 45px; margin-left: 30px; border-radius: 23px; background: #fff; box-shadow: 0 0 6px rgba(0,0,0,.08); display: flex; align-items: center; padding: 0 25px 0 27px; }
.address svg { width: 24px; height: 24px; }
.address svg:last-child { margin-left: 35px; }
.url { width: 1135px; flex: none; padding-left: 23px; font-size: 19.700px; color: #777; letter-spacing: .06px; }
.url b { font-weight: 400; color: #111; }
.tools { display: flex; align-items: center; margin-left: 31px; gap: 42px; }
.tools svg { width: 24px; height: 24px; }
.tools .sep { width: 2px; height: 24px; background: #d0d0d0; margin: 0 -19px 0 -18px; }
.copilot { width: 36px; height: 32px; margin-left: 33px; }

/* Favourites */
.bookmarks { height: 51px; flex: none; display: grid; grid-template-columns: 129px 107px 91px 128px 120px 129px 105px 147px 121px 1fr 257px; padding: 0 0 4px 21px; align-items: center; font-size: 17px; color: #1a1a1a; letter-spacing: -.15px; }
.bm { display: flex; align-items: center; gap: 12px; }
.bm svg { width: 24px; height: 24px; }
.bm span { padding-bottom: 1px; }
.other { height: 24px; border-left: 2px solid #d0d0d0; padding-left: 14px; }

/* Page area */
.workspace { height: 852px; flex: none; display: flex; padding-left: 6px; align-items: flex-start; }
.page { width: 1848px; height: 847px; background: #fff; border-radius: 15px; overflow: hidden; box-shadow: 0 0 3px rgba(0,0,0,.3); }
.mlnav { height: 90px; background: #0b3574; display: flex; align-items: center; color: #e7f1fb; font-size: 22.300px; padding: 0 36px; }
.logo { width: 156px; height: 62px; overflow: visible; }
.logo text { font-family: "Open Sans", sans-serif; }
.lg-ml { font-size: 46px; font-weight: 600; fill: #fff; }
.lg-f { font-size: 58px; font-style: italic; font-weight: 600; fill: #0a95e4; }
.lg-l { font-size: 46px; font-style: italic; font-weight: 600; fill: #0a95e4; }
.lg-w { font-size: 44px; font-style: italic; font-weight: 600; fill: #0a95e4; }
.ver { width: 83px; padding: 20px 0 0 8px; font-size: 16.500px; letter-spacing: -.3px; }
.nav { height: 90px; line-height: 99px; letter-spacing: -.1px; }
.nav.cur { width: 129px; border-bottom: 6px solid #43c9ed; margin-left: 7px; }
.nav.mod { margin-left: 36px; letter-spacing: .15px; }
.mlright { margin-left: auto; display: flex; align-items: center; padding-top: 2px; }
.toggle { width: 42px; height: 24px; margin-bottom: -1px; border-radius: 12px; background: #fff; display: flex; }
.toggle::before { content: ""; width: 24px; height: 24px; border-radius: 12px; border: 1.500px solid #c0cdd8; }
.sun { width: 24px; height: 24px; margin: 0 0 -1px 12px; }
.gh { width: 74px; margin-left: 36px; padding-top: 1px; letter-spacing: .15px; }
.docs { width: 52px; margin-left: 37px; padding-top: 1px; letter-spacing: .1px; }

.content { display: flex; padding: 0 24px 0 36px; }
.exps { width: 396px; }
.exphead { height: 90px; padding-top: 19px; display: flex; align-items: center; }
h2, h1 { margin: 0; font-size: 30.500px; line-height: 36px; font-weight: 600; letter-spacing: -.05px; }
h2 { flex: 1; padding: 6px 0 0; letter-spacing: -.15px; }
.addexp { width: 36px; height: 36px; }
.collapse { width: 32px; height: 32px; margin: 0 2px 0 8px; }
.expsearch { height: 48px; border: 1.500px solid #cbd7e2; border-radius: 6px; line-height: 47px; padding-left: 18px; color: #8396a5; }
.exprow { height: 48px; display: flex; align-items: center; padding: 0 28px 0 12px; margin-top: -2px; color: #2272b4; }
.exprow.sel { background: #dbe7f3; box-shadow: inset 6px 0 #2272b4; margin-top: 2px; padding-bottom: 4px; }
.exprow a { flex: 1; margin-left: 36px; padding-bottom: 1px; letter-spacing: -.08px; }
.cb { width: 24px; height: 24px; border: 2px solid #c3d0dc; border-radius: 5px; background: #fff; }
.cb.on { background: #2272b4; border: 0; }
.pen { width: 22px; height: 22px; margin-top: -4px; }
.bin { width: 16px; height: 18px; margin-left: 13px; }

main { width: 1332px; margin-left: 60px; }
.title { height: 123px; display: flex; align-items: flex-start; padding-top: 36px; }
h1 { width: 279px; margin-top: 14px; }
.i24 { width: 24px; height: 24px; color: #5f7281; }
.title .i24 { margin: 18px 0 0 17px; }
.fb { width: 152px; margin: 18px 0 0 12px; line-height: 26px; color: #2272b4; }
.ext { width: 22px; height: 22px; margin: 19px 0 0 7px; }
.desc { width: 162px; height: 36px; margin: 12px 0 0 13px; border-radius: 6px; background: #f6f7f9; text-align: center; line-height: 38px; letter-spacing: .05px; }
.btn { height: 48px; border-radius: 6px; background: #2272b4; color: #fff; line-height: 49px; text-align: center; }
.share { width: 86px; margin-left: auto; }
.controls { display: flex; justify-content: space-between; }
.filters { display: flex; flex-direction: column; gap: 12px; }
.frow { display: flex; gap: 12px; }
.runsearch { width: 645px; height: 48px; border: 1.500px solid #c5d1dc; border-radius: 6px; display: flex; align-items: center; padding: 0 18px; color: #b9bfc5; }
.runsearch span { flex: 1; margin-left: 12px; letter-spacing: .1px; }
.runsearch .inf { margin-top: -3px; }
.frow .sel { height: 48px; border: 1.500px solid #bccad6; border-radius: 6px; display: flex; align-items: center; padding: 0 17px 0 18px; }
.sel span { flex: 1; }
.time { width: 179px; } .state { width: 168px; } .datasets { width: 141px; background: #e7ebf0; color: #92a4b3; }
.sortby { width: 210px; } .columns { width: 173px; } .groupby { width: 184px; }
.frow .columns { padding-right: 23px; } .frow .groupby { padding-right: 23px; }
.chev { width: 14px; height: 14px; color: #5f7281; }
.chev.dark { color: #11171c; }
.ic { width: 22px; height: 22px; margin: 0 7px 0 1px; }
.ic.g { color: #5f7281; }
.actions { display: flex; align-items: center; height: 48px; margin-top: 30px; }
.actions > svg { width: 22px; height: 22px; margin-right: 38px; }
.actions > svg:nth-of-type(3) { margin-right: 25px; }
.newrun { width: 141px; display: flex; align-items: center; gap: 8px; padding-left: 20px; }
.newrun svg { width: 22px; height: 22px; }

.views { height: 61px; border-bottom: 1.500px solid #c8d4df; display: flex; align-items: flex-start; padding-top: 21px; color: #5f7281; font-weight: 600; font-size: 17.800px; }
.views a { height: 39px; line-height: 32px; letter-spacing: -.05px; }
.views .cur { width: 46px; color: #11171c; border-bottom: 5px solid #2272b4; }
.chart { width: 88px; margin-left: 39px; }
.views .chart { letter-spacing: .2px; }
.views .eval { width: 97px; letter-spacing: .08px; }
.views span { width: 124px; height: 30px; border-radius: 5px; background: #137cad; color: #fff; font-weight: 400; text-align: center; line-height: 32px; font-size: 18.200px; }

/* Runs grid */
.grid { height: 402px; border-bottom: 2px solid #cfd9e3; font-size: 17.300px; letter-spacing: -.1px; }
.band { height: 49px; background: #f6f7f9; border-bottom: 1.500px solid #d0dae3; }
.hrow, .row { display: grid; grid-template-columns: 66px 92px 262px 225px 450px 120px 1fr; height: 48px; }
.hrow { background: #f6f7f9; border-bottom: 1.500px solid #cfdae4; color: #5f7281; font-weight: 600; font-size: 16.900px; }
.hrow > div, .row > div { display: flex; align-items: center; }
.c-cb { padding-left: 12px; }
.c-eye svg { width: 24px; height: 18px; }
.hrow .c-eye, .hrow .c-cb { padding-bottom: 2px; }
.c-eye + .c-name { padding-left: 18px; }
.c-created { padding-left: 18px; background: #f0f8ff; border-right: 1.500px solid #cfdae4; }
.hrow .c-created { background: #e8f1fb; border-right: 0; justify-content: space-between; padding-right: 18px; }
.hrow svg { color: #5f7281; }
.hrow .c-created svg { width: 22px; height: 22px; margin-bottom: 2px; }
.c-data, .c-dur { padding-left: 18px; }
.c-src { padding-left: 18px; }
.body { height: 283px; display: flex; }
.rows { width: 1309px; height: 283px; overflow: hidden; }
.row { border-bottom: 1.500px solid #cfdae4; }
.row .c-name { padding-left: 27px; color: #2272b4; }
.row .c-name svg { width: 16px; height: 16px; margin-top: 6px; }
.row .c-name.focus { border: 1.500px solid #1187d8; padding-left: 26px; }
.dot { width: 18px; height: 18px; border-radius: 9px; margin: 0 12px 0 10px; }
.blue { background: #8bcae7; } .navy { background: #1b5062; } .green { background: #99ddb4; } .red { background: #ff3621; } .amber { background: #ffab00; } .grey { background: #c3c3c3; }
.row .c-created svg { width: 22px; height: 22px; margin: 0 11px 1px 0; }
.row .c-src { overflow: hidden; }
.row .c-src svg { width: 20px; height: 16px; margin: 6px 5px 0 0; }
.vscroll { width: 23px; background: #fcfcfc; display: flex; flex-direction: column; align-items: center; padding-top: 13px; fill: #8b8b8b; }
.vscroll svg { width: 15px; height: 11px; }
.vscroll i { width: 13px; height: 140px; border-radius: 7px; background: #8b8b8b; margin: 11px 0 86px; }
.hscrolls { display: flex; height: 21px; fill: #8b8b8b; }
.hscroll { display: flex; align-items: center; background: #fcfcfc; padding-top: 2px; }
.hscroll svg { width: 11px; height: 14px; }
.hscroll.a { width: 645px; padding: 2px 12px 0; justify-content: space-between; border-right: 1.500px solid #cfdae4; }
.hscroll.b { width: 664px; padding: 2px 10px 0 12px; }
.hscroll i { width: 338px; height: 13px; border-radius: 7px; background: #8b8b8b; margin: 0 auto 0 12px; }
.count { padding-top: 7px; line-height: 25px; font-size: 17.300px; letter-spacing: -.15px; }
.count b { font-weight: 600; }

/* Edge sidebar */
.edgebar { width: 66px; height: 880px; display: flex; flex-direction: column; align-items: center; margin-top: -33px; }
.edgebar > svg { width: 30px; height: 30px; margin-bottom: 30px; }
.rule { width: 42px; height: 2px; background: #bdbdbd; margin-top: 2px; }
.edgebar .plus { width: 18px; height: 18px; margin: 39px 0 336px; }
.rule.low { margin: 0; }
.edgebar .gear { width: 26px; height: 26px; margin: 20px 0 0; }

/* Taskbar */
.taskbar { height: 72px; flex: none; border-top: 2px solid #adb5c2; display: flex; align-items: center; padding-left: 31px; background: linear-gradient(90deg, #deebf5 0, #deeaf6 16%, #d4e0f7 24%, #d7dff4 50%, #d6e0f6 66%, #d8dcee 74%, #dfeaf6 82%, #e1eef8); color: #1a1a1a; }
.taskbar > * { margin-bottom: 2px; }
.start { width: 35px; height: 35px; }
.tsearch { width: 328px; height: 47px; margin-left: 21px; border-radius: 24px; background: #f7fafd; border: 1.500px solid #d0dbe8; border-bottom: 2px solid #b9c3cf; display: flex; align-items: center; padding: 0 6px 0 15px; font-size: 19px; color: #5b5f64; }
.i22 { width: 23px; height: 23px; color: #111; }
.tsearch span { margin-left: 16px; flex: 1; }
.basket { width: 67px; height: 36px; }
.apps { display: flex; margin-left: 4px; }
.app { position: relative; width: 66px; height: 60px; display: flex; align-items: center; justify-content: center; }
.app > svg { width: 36px; height: 36px; }
.app.run::after { content: ""; position: absolute; bottom: 0; left: 28.500px; width: 9px; height: 5px; border-radius: 3px; background: #7e8798; }
.app.cur { background: #ebf0fa; border-radius: 6px; width: 52px; margin: 0 9px 0 5px; padding-left: 4px; height: 58px; border: 1px solid #cdd7ea; box-shadow: 4px 0 0 -1px #e3eaf7, 5px 0 0 -1px #c9d3e6; }
.app.cur::after { left: 15px; bottom: 0; width: 24px; background: #0a77d4; }
.app .pin { position: absolute; width: 24px; height: 24px; right: 6px; top: 4px; }
.app .pin.dc { right: 7px; top: 5px; width: 22px; height: 22px; }
.badge { font-family: "Open Sans", sans-serif; font-size: 9.500px; font-weight: 700; }
.teams { font-family: "Open Sans", sans-serif; font-size: 16px; font-weight: 700; fill: #4b53bc; }
.cbadge { font-family: "Open Sans", sans-serif; font-size: 14px; font-weight: 600; fill: #ffd5e2; }
.tray { display: flex; align-items: center; margin-left: 175px; font-size: 17.200px; letter-spacing: -.1px; }
.tray svg { width: 24px; height: 24px; }
.tray .t-up { width: 16px; height: 16px; }
.t-cloud { margin-left: 29px; }
.tray .t-loc { margin-left: 24px; width: 22px; }
.lang, .clock { display: flex; flex-direction: column; line-height: 24px; }
.lang { width: 36px; margin-left: 28px; align-items: center; line-height: 23px; }
.t-net { margin-left: 26px; }
.t-vol, .t-bat { margin-left: 12px; }
.clock { width: 78px; margin-left: 25px; align-items: flex-end; }
.tray .t-bell { width: 20px; height: 24px; margin-left: 12px; }
```
